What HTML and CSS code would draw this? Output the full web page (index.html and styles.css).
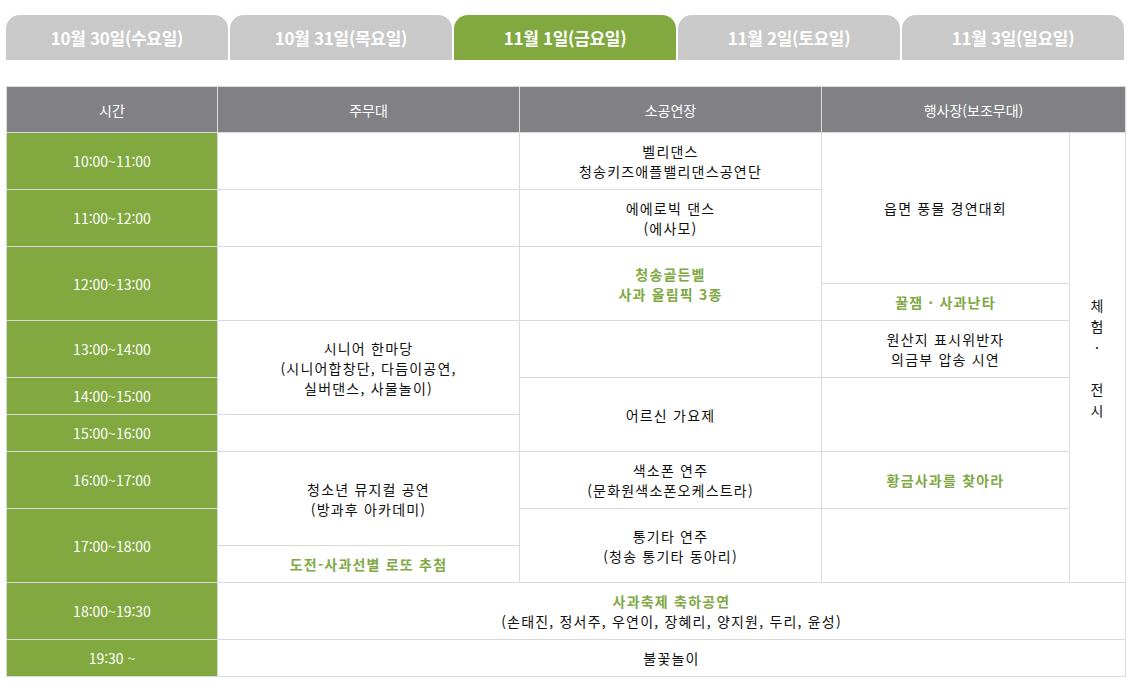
FILE: index.html
```html
<!DOCTYPE html>
<html lang="ko">

<head>
    <meta charset="UTF-8">
    <title>청송사과축제 행사일정</title>
    <link rel="stylesheet" href="styles.css">
</head>

<body>
    <div class="wrap">
        <!-- 날짜 탭 -->
        <ul class="tabs">
            <li>10월 30일(수요일)</li>
            <li>10월 31일(목요일)</li>
            <li class="on">11월 1일(금요일)</li>
            <li>11월 2일(토요일)</li>
            <li>11월 3일(일요일)</li>
        </ul>

        <!-- 시간표 -->
        <table class="schedule">
            <colgroup>
                <col class="c-time">
                <col class="c-main">
                <col class="c-hall">
                <col class="c-event">
                <col class="c-side">
            </colgroup>
            <thead>
                <tr>
                    <th>시간</th>
                    <th>주무대</th>
                    <th>소공연장</th>
                    <th colspan="2">행사장(보조무대)</th>
                </tr>
            </thead>
            <tbody>
                <tr class="tall">
                    <td class="time">10:00~11:00</td>
                    <td></td>
                    <td>벨리댄스<br>청송키즈애플밸리댄스공연단</td>
                    <td rowspan="3">읍면 풍물 경연대회</td>
                    <td rowspan="10" class="side">체<br>험<br>·<br><br>전<br>시</td>
                </tr>
                <tr class="tall">
                    <td class="time">11:00~12:00</td>
                    <td></td>
                    <td>에에로빅 댄스<br>(에사모)</td>
                </tr>
                <tr class="short">
                    <td class="time" rowspan="2">12:00~13:00</td>
                    <td rowspan="2"></td>
                    <td rowspan="2" class="point">청송골든벨<br>사과 올림픽 3종</td>
                </tr>
                <tr class="short">
                    <td class="point">꿀잼 · 사과난타</td>
                </tr>
                <tr class="tall">
                    <td class="time">13:00~14:00</td>
                    <td rowspan="2">시니어 한마당<br>(시니어합창단, 다듬이공연,<br>실버댄스, 사물놀이)</td>
                    <td></td>
                    <td>원산지 표시위반자<br>의금부 압송 시연</td>
                </tr>
                <tr class="short">
                    <td class="time">14:00~15:00</td>
                    <td rowspan="2">어르신 가요제</td>
                    <td rowspan="2"></td>
                </tr>
                <tr class="short">
                    <td class="time">15:00~16:00</td>
                    <td></td>
                </tr>
                <tr class="tall">
                    <td class="time">16:00~17:00</td>
                    <td rowspan="2">청소년 뮤지컬 공연<br>(방과후 아카데미)</td>
                    <td>색소폰 연주<br>(문화원색소폰오케스트라)</td>
                    <td class="point">황금사과를 찾아라</td>
                </tr>
                <tr class="short">
                    <td class="time" rowspan="2">17:00~18:00</td>
                    <td rowspan="2">통기타 연주<br>(청송 통기타 동아리)</td>
                    <td rowspan="2"></td>
                </tr>
                <tr class="short">
                    <td class="point">도전-사과선별 로또 추첨</td>
                </tr>
                <tr class="tall">
                    <td class="time">18:00~19:30</td>
                    <td colspan="4"><span class="point">사과축제 축하공연</span><br>(손태진, 정서주, 우연이, 장혜리, 양지원, 두리, 윤성)</td>
                </tr>
                <tr class="short">
                    <td class="time">19:30 ~</td>
                    <td colspan="4">불꽃놀이</td>
                </tr>
            </tbody>
        </table>
    </div>
</body>

</html>
```

FILE: styles.css
```css
* {
    padding: 0;
    margin: 0;
    list-style: none;
}

body {
    font-family: "Noto Sans CJK KR", "Noto Sans", sans-serif;
    font-size: 14px;
    color: #111;
    background: #fff;
}

.wrap {
    width: 1119px;
    padding: 15px 0 0 6px;
}

/* 날짜 탭 */
.tabs {
    display: flex;
    gap: 2px;
    width: 1118px;
}

.tabs li {
    flex: 1;
    height: 45px;
    line-height: 45px;
    text-align: center;
    background: #c9c9c9;
    color: #fff;
    font-size: 17px;
    font-weight: bold;
    border-radius: 14px 14px 0 0;
    letter-spacing: -0.3px;
}

.tabs li.on {
    background: #82a940;
}

/* 시간표 */
.schedule {
    margin-top: 26px;
    width: 1119px;
    border-collapse: collapse;
    table-layout: fixed;
    text-align: center;
    line-height: 20px;
}

.c-time { width: 211px; }
.c-main { width: 302px; }
.c-hall { width: 302px; }
.c-event { width: 248px; }
.c-side { width: 56px; }

.schedule th,
.schedule td {
    border: 1px solid #dadada;
    padding: 0;
    vertical-align: middle;
}

.schedule td {
    letter-spacing: 1.2px;
}

.schedule th {
    height: 45px;
    background: #808085;
    color: #fff;
    font-weight: normal;
}

.schedule tr.tall {
    height: 57px;
}

.schedule tr.short {
    height: 37px;
}

.schedule td.time {
    background: #82a940;
    color: #fff;
    letter-spacing: 0;
}

.schedule .point {
    color: #80a945;
    font-weight: bold;
}

.schedule td.side {
    line-height: 21px;
}
```
